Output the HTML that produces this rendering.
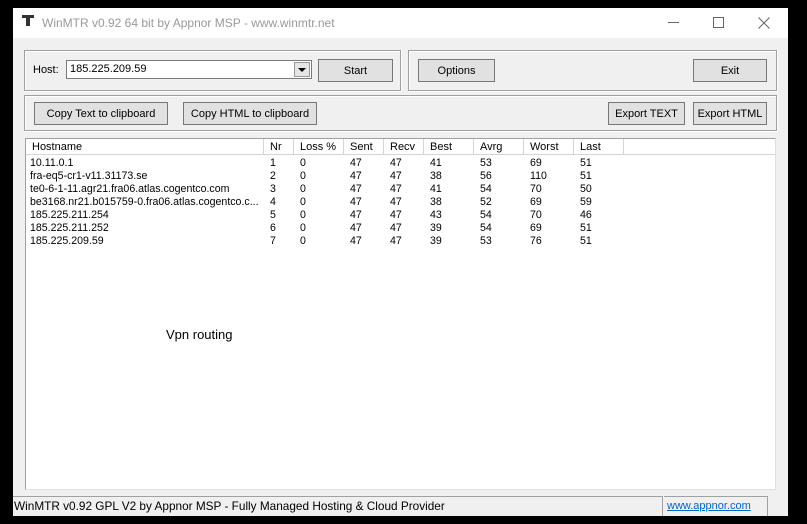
<!DOCTYPE html><html><head><style>
*{margin:0;padding:0;box-sizing:border-box}
body{width:807px;height:524px;background:#000;position:relative;overflow:hidden;font-family:"Liberation Sans",sans-serif;font-size:11px;color:#000}
.a{position:absolute}
.win{left:13px;top:8px;width:775px;height:508px;background:#f0f0f0}
.title{left:13px;top:8px;width:775px;height:30px;background:#fff}
.grp{position:absolute;border:1px solid #a0a0a0;box-shadow:inset 1px 1px 0 #fff,1px 1px 0 #fff}
.btn{position:absolute;background:#e1e1e1;border:1px solid #777;text-align:center;line-height:22px;font-size:11px}
.list{left:25px;top:138px;width:751px;height:352px;background:#fff;border:1px solid #a0a0a0;border-right-color:#e0e0e0;border-bottom-color:#e0e0e0}
.hd{position:absolute;top:0;height:16px;border-right:1px solid #d5d5d5;border-bottom:1px solid #d5d5d5;padding-left:6px;line-height:17px;font-size:11px}
.c{position:absolute;font-size:10.6px;line-height:13px;white-space:nowrap}
</style></head><body>
<div class="a win"></div>
<div class="a title"></div>
<div class="a" style="left:22px;top:15px;width:12px;height:3px;background:#333"></div>
<div class="a" style="left:26px;top:17px;width:4px;height:9px;background:#333"></div>
<div class="a" style="left:42px;top:16px;color:#999;font-size:12px">WinMTR v0.92 64 bit by Appnor MSP - www.winmtr.net</div>
<div class="a" style="left:668px;top:22px;width:11px;height:1px;background:#666"></div>
<div class="a" style="left:713px;top:17px;width:11px;height:11px;border:1px solid #666"></div>
<svg class="a" style="left:758px;top:17px" width="12" height="12"><path d="M0.5 0.5L11.5 11.5M11.5 0.5L0.5 11.5" stroke="#666" stroke-width="1"/></svg>

<div class="grp" style="left:24px;top:50px;width:377px;height:41px"></div>
<div class="grp" style="left:408px;top:50px;width:369px;height:41px"></div>
<div class="grp" style="left:24px;top:95px;width:753px;height:36px"></div>
<div class="a" style="left:33px;top:64px;font-size:11px">Host:</div>
<div class="a" style="left:66px;top:60px;width:246px;height:19px;background:#fff;border:1px solid #7a7a7a;padding-left:3px;line-height:16px;font-size:11px">185.225.209.59</div>
<div class="a" style="left:294px;top:62px;width:16px;height:15px;background:#e5e5e5;border:1px solid #999"></div>
<div class="a" style="left:298px;top:68px;width:0;height:0;border-left:4px solid transparent;border-right:4px solid transparent;border-top:4px solid #000"></div>
<div class="btn" style="left:318px;top:59px;width:75px;height:23px">Start</div>
<div class="btn" style="left:418px;top:59px;width:77px;height:23px">Options</div>
<div class="btn" style="left:693px;top:59px;width:74px;height:23px">Exit</div>
<div class="btn" style="left:34px;top:102px;width:134px;height:23px">Copy Text to clipboard</div>
<div class="btn" style="left:183px;top:102px;width:134px;height:23px">Copy HTML to clipboard</div>
<div class="btn" style="left:608px;top:102px;width:77px;height:23px">Export TEXT</div>
<div class="btn" style="left:693px;top:102px;width:74px;height:23px">Export HTML</div>

<div class="a list">
<div class="hd" style="left:0;width:238px">Hostname</div>
<div class="hd" style="left:238px;width:30px">Nr</div>
<div class="hd" style="left:268px;width:50px">Loss %</div>
<div class="hd" style="left:318px;width:40px">Sent</div>
<div class="hd" style="left:358px;width:40px">Recv</div>
<div class="hd" style="left:398px;width:50px">Best</div>
<div class="hd" style="left:448px;width:50px">Avrg</div>
<div class="hd" style="left:498px;width:50px">Worst</div>
<div class="hd" style="left:548px;width:50px">Last</div>
<div class="hd" style="left:598px;width:151px;border-right:none"></div>
</div>
<div class="c" style="left:30px;top:157px">10.11.0.1<br>fra-eq5-cr1-v11.31173.se<br>te0-6-1-11.agr21.fra06.atlas.cogentco.com<br>be3168.nr21.b015759-0.fra06.atlas.cogentco.c...<br>185.225.211.254<br>185.225.211.252<br>185.225.209.59</div>
<div class="c" style="left:270px;top:157px">1<br>2<br>3<br>4<br>5<br>6<br>7</div>
<div class="c" style="left:300px;top:157px">0<br>0<br>0<br>0<br>0<br>0<br>0</div>
<div class="c" style="left:350px;top:157px">47<br>47<br>47<br>47<br>47<br>47<br>47</div>
<div class="c" style="left:390px;top:157px">47<br>47<br>47<br>47<br>47<br>47<br>47</div>
<div class="c" style="left:430px;top:157px">41<br>38<br>41<br>38<br>43<br>39<br>39</div>
<div class="c" style="left:480px;top:157px">53<br>56<br>54<br>52<br>54<br>54<br>53</div>
<div class="c" style="left:530px;top:157px">69<br>110<br>70<br>69<br>70<br>69<br>76</div>
<div class="c" style="left:580px;top:157px">51<br>51<br>50<br>59<br>46<br>51<br>51</div>
<div class="a" style="left:166px;top:327px;font-size:13px">Vpn routing</div>

<div class="a" style="left:13px;top:496px;width:650px;height:20px;border-top:1px solid #a0a0a0;border-right:1px solid #a0a0a0"></div>
<div class="a" style="left:14px;top:499px;font-size:11.8px">WinMTR v0.92 GPL V2 by Appnor MSP - Fully Managed Hosting &amp; Cloud Provider</div>
<div class="a" style="left:664px;top:496px;width:104px;height:20px;border-top:1px solid #a0a0a0;border-right:1px solid #a0a0a0"></div>
<div class="a" style="left:667px;top:500px;font-size:11px;color:#0066cc;text-decoration:underline">www.appnor.com</div>
</body></html>
